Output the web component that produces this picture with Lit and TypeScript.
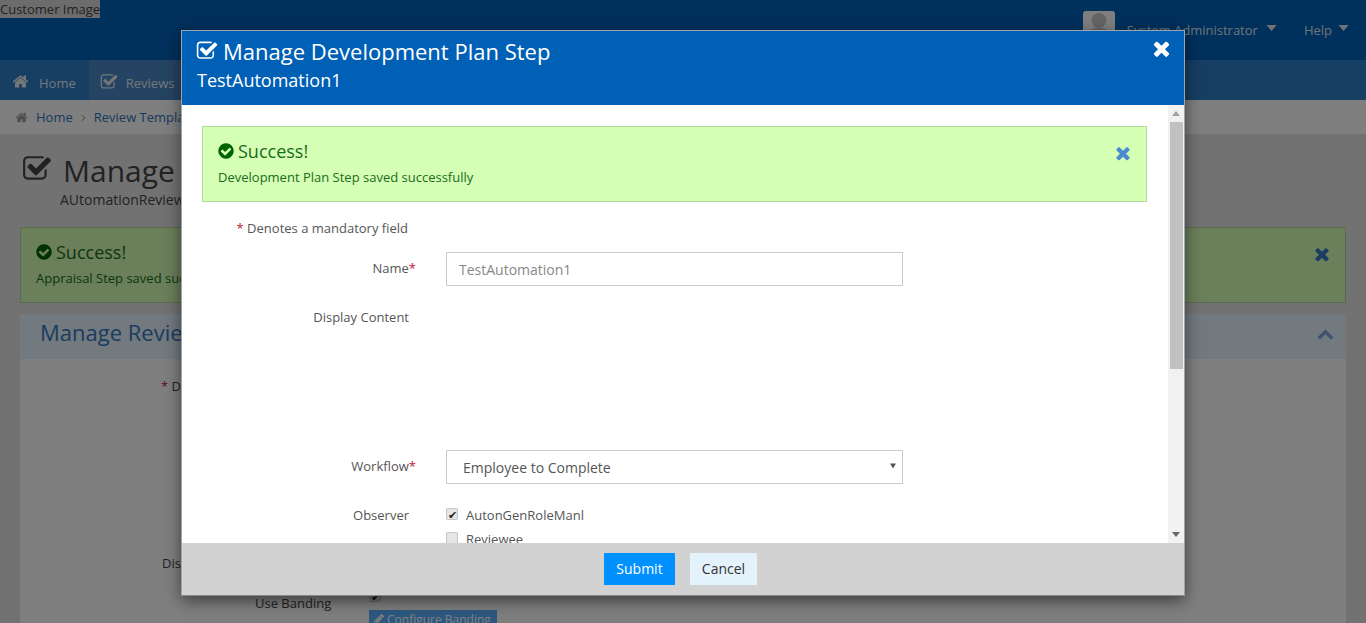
import { LitElement, html, css, svg } from "lit";
import { customElement } from "lit/decorators.js";

const P = {
  times: "M1490 1322q0 40-28 68l-136 136q-28 28-68 28t-68-28l-294-294-294 294q-28 28-68 28t-68-28l-136-136q-28-28-28-68t28-68l294-294-294-294q-28-28-28-68t28-68l136-136q28-28 68-28t68 28l294 294 294-294q28-28 68-28t68 28l136 136q28 28 28 68t-28 68l-294 294 294 294q28 28 28 68z",
  circle: "M1412 734q0-28-18-46l-91-90q-19-19-45-19t-45 19l-408 407-226-226q-19-19-45-19t-45 19l-91 90q-18 18-18 46 0 27 18 45l362 362q19 19 45 19 27 0 46-19l543-543q18-18 18-45zm252 162q0 209-103 385.500t-279.500 279.500-385.500 103-385.500-103-279.500-279.500-103-385.500 103-385.500 279.500-279.500 385.500-103 385.500 103 279.500 279.500 103 385.500z",
  square: "M1472 930v318q0 119-84.500 203.500t-203.500 84.500h-832q-119 0-203.500-84.500t-84.500-203.500v-832q0-119 84.500-203.500t203.500-84.500h832q63 0 117 25 15 7 18 23 3 17-9 29l-49 49q-10 10-23 10-3 0-9-2-23-6-45-6h-832q-66 0-113 47t-47 113v832q0 66 47 113t113 47h832q66 0 113-47t47-113v-254q0-13 9-22l64-64q10-10 23-10 6 0 12 3 20 8 20 29zm231-489l-814 814q-24 24-57 24t-57-24l-430-430q-24-24-24-57t24-57l110-110q24-24 57-24t57 24l263 263 647-647q24-24 57-24t57 24l110 110q24 24 24 57t-24 57z",
  home: "M1472 992v480q0 26-19 45t-45 19h-384v-384h-256v384h-384q-26 0-45-19t-19-45v-480q0-1 .5-3t.5-3l575-474 575 474q1 2 1 6zm223-69l-62 74q-8 9-21 11h-3q-13 0-21-7l-692-577-692 577q-12 8-24 7-13-2-21-11l-62-74q-8-10-7-23.500t11-21.500l719-599q32-26 76-26t76 26l244 204v-195q0-14 9-23t23-9h192q14 0 23 9t9 23v408l219 182q10 8 11 21.500t-7 23.500z",
  chevron: "M1683 1331l-166 165q-19 19-45 19t-45-19l-531-531-531 531q-19 19-45 19t-45-19l-166-165q-19-19-19-45.500t19-45.500l742-741q19-19 45-19t45 19l742 741q19 19 19 45.500t-19 45.500z",
  right: "M1171 960q0 13-10 23l-466 466q-10 10-23 10t-23-10l-50-50q-10-10-10-23t10-23l393-393-393-393q-10-10-10-23t10-23l50-50q10-10 23-10t23 10l466 466q10 10 10 23z",
  pencil: "M491 1536l91-91-235-235-91 91v107h128v128h107zm523-928q0-22-22-22-10 0-17 7l-542 542q-7 7-7 17 0 22 22 22 10 0 17-7l542-542q7-7 7-17zm-54-192l416 416-832 832h-416v-416zm683 96q0 53-37 90l-166 166-416-416 166-165q36-38 90-38 53 0 91 38l235 234q37 39 37 91z",
};

const icon = (d: string, cls: string) =>
  html`<svg class=${cls} viewBox="0 0 1792 1792" fill="currentColor">${svg`<path d=${d}></path>`}</svg>`;
const caret = (cls: string) =>
  html`<svg class="caret ${cls}" viewBox="0 0 12 7" fill="currentColor">${svg`<path d="M0 0h12L6 7z"></path>`}</svg>`;

@customElement("app-root")
export class AppRoot extends LitElement {
  static styles = css`
    :host {
      display: block;
      position: relative;
      height: 623px;
      overflow: hidden;
      font-family: "Open Sans", "Liberation Sans", sans-serif;
      font-size: 13px;
      color: #555;
      background: #e4e4e4;
    }
    svg { display: block; flex: none; }

    /* background page */
    .top {
      height: 60px;
      background: #0060b8;
      display: flex;
      justify-content: space-between;
      align-items: flex-start;
    }
    .customer {
      background: #d8d8d8;
      color: #444;
      font-size: 13px;
      line-height: 18px;
      height: 18px;
    }
    .user {
      display: flex;
      align-items: center;
      padding: 11px 17px 0 0;
      color: #dfe6ee;
      font-size: 13px;
      line-height: 38px;
    }
    .avatar {
      width: 32px;
      height: 38px;
      background: #fff;
      border-radius: 3px;
      color: #c8c8c8;
      margin-right: 12px;
    }
    .user .caret { width: 11px; height: 6px; margin: -4px 27px 0 8px; }
    .user .caret.last { margin: -4px 0 0 6px; }
    .nav {
      height: 40px;
      background: #2e7cc6;
      display: flex;
      color: #e8eef5;
    }
    .nav div {
      display: flex;
      align-items: center;
      padding: 6px 13px 0 12px;
      gap: 10px;
    }
    .nav .home svg { width: 17px; height: 17px; margin-top: -3px; }
    .nav .on { background: #4b86c4; width: 92px; box-sizing: border-box; gap: 8px; padding-left: 11px; }
    .nav .on svg { width: 18px; height: 18px; margin-top: -3px; }
    .crumb {
      height: 34px;
      background: #fff;
      display: flex;
      align-items: center;
      padding-left: 15px;
      color: #2f74b8;
      gap: 7px;
    }
    .crumb svg { width: 13px; height: 13px; color: #999; margin-right: 1px; }
    .crumb .sep { width: 11px; height: 11px; margin: 0 -2px; }
    .content { padding: 0 20px; }
    .pagehead {
      display: flex;
      gap: 11px;
      padding: 18px 0 0 2px;
      height: 93px;
      box-sizing: border-box;
      color: #444;
    }
    .pagehead svg { width: 30px; height: 30px; margin-top: 2px; }
    .pagehead h1 { margin: 0; font-size: 30px; font-weight: 400; line-height: 38px; }
    .pagehead p { margin: 1px 0 0 -3px; font-size: 14px; line-height: 18px; }
    .alert {
      position: relative;
      box-sizing: border-box;
      background: #d4ffb4;
      border: 1px solid #b5d8a0;
      color: #1c6b1c;
      padding: 11px 15px;
      height: 76px;
    }
    .alert .t {
      display: flex;
      align-items: center;
      gap: 3px;
      font-size: 18px;
      line-height: 26px;
    }
    .alert .t svg { width: 18px; height: 18px; color: #006400; margin-left: -1px; }
    .alert .m { font-size: 13px; line-height: 18px; margin-top: 4px; }
    .alert .x {
      position: absolute;
      right: 13px;
      top: 16px;
      width: 20px;
      height: 20px;
      color: #4a8bd0;
    }
    .pagealert .x { color: #3a78c8; }
    .panelhead {
      margin-top: 11px;
      height: 45px;
      background: #e4f2ff;
      display: flex;
      align-items: center;
      justify-content: space-between;
      padding: 0 12px 10px 20px;
      box-sizing: border-box;
      color: #3a78c0;
      font-size: 22px;
    }
    .panelhead svg { width: 17px; height: 17px; color: #7fa9d6; margin-top: 4px; }
    .panelbody {
      background: #fff;
      height: 300px;
      position: relative;
      font-size: 13px;
      color: #444;
    }
    .bg-row { position: absolute; color: #444; }
    .b1 { left: 141px; top: 18px; }
    .b2 { left: 142px; top: 195px; }
    .b3 { left: 235px; top: 235px; }
    .req { color: #c8102e; }
    .mark { position: absolute; left: 349px; top: 233px; }
    .band {
      position: absolute;
      left: 349px;
      top: 251px;
      background: #5cb0ff;
      color: #fff;
      font-size: 12px;
      display: flex;
      align-items: center;
      gap: 2px;
      padding: 0 6px 6px 4px;
      box-sizing: border-box;
      height: 24px;
    }
    .band svg { width: 12px; height: 12px; }

    /* overlay + modal */
    .backdrop { position: absolute; inset: 0; background: rgba(0, 0, 0, 0.5); }
    .modal {
      position: absolute;
      left: 181px;
      top: 30px;
      width: 1004px;
      height: 566px;
      box-sizing: border-box;
      border: 1px solid #9aa5b0;
      border-bottom-color: #888;
      background: #fff;
      display: flex;
      flex-direction: column;
      box-shadow: 0 5px 15px rgba(0, 0, 0, 0.5);
    }
    .mhead {
      position: relative;
      height: 74px;
      flex: none;
      background: #0060b6;
      color: #fff;
      padding: 5px 15px;
      box-sizing: border-box;
    }
    .mtitle { display: flex; align-items: center; gap: 5px; font-size: 22px; line-height: 30px; }
    .mtitle svg { width: 22px; height: 22px; margin-left: -1px; }
    .msub { font-size: 18px; line-height: 24px; margin-top: 2px; }
    .mclose {
      position: absolute;
      right: 11px;
      top: 6px;
      width: 23px;
      height: 23px;
    }
    .mmain { flex: 1; display: flex; min-height: 0; }
    .form { flex: 1; min-width: 0; overflow: hidden; padding: 21px 21px 0 20px; }
    .scroll {
      width: 16px;
      flex: none;
      display: flex;
      flex-direction: column;
      background: #f1f1f1;
    }
    .arrow {
      height: 17px;
      display: flex;
      align-items: center;
      justify-content: center;
      color: #666;
    }
    .arrow svg { width: 8px; height: 5px; }
    .arrow.up svg { transform: rotate(180deg); color: #a3a3a3; }
    .thumb { height: 247px; background: #c1c1c1; margin: 0 1px 0 2px; }
    .grow { flex: 1; }
    .mandatory {
      width: 206px;
      text-align: right;
      line-height: 20px;
      margin-top: 16px;
    }
    .row {
      display: grid;
      grid-template-columns: 214px 457px;
      column-gap: 30px;
      align-items: start;
    }
    .lab { text-align: right; line-height: 18px; }
    .lab .plain { padding-right: 7px; display: block; }
    .field {
      box-sizing: border-box;
      height: 34px;
      border: 1px solid #ccc;
      background: #fff;
      display: flex;
      align-items: center;
      padding: 0 12px;
      font-size: 14px;
      color: #888;
    }
    .select { color: #555; padding: 0 6px 0 16px; justify-content: space-between; }
    .select svg { width: 6px; height: 6px; color: #555; margin-top: -3px; }
    .r-name { margin-top: 14px; }
    .r-name .lab { padding-top: 7px; }
    .r-display { margin-top: 22px; height: 142px; }
    .r-work .lab { padding-top: 7px; }
    .r-obs { margin-top: 22px; }
    .checks { display: flex; flex-direction: column; gap: 6px; }
    .check { display: flex; align-items: center; gap: 8px; line-height: 18px; height: 18px; }
    .box {
      box-sizing: border-box;
      width: 12px;
      height: 12px;
      border: 1px solid #c4c4c4;
      border-radius: 2px;
      background: #e6e6e6;
      margin-top: -2px;
      display: flex;
      align-items: center;
      justify-content: center;
      color: #222;
      font-size: 11px;
      line-height: 1;
    }
    .mfoot {
      flex: none;
      height: 52px;
      background: #d2d2d2;
      display: flex;
      justify-content: center;
      align-items: center;
      gap: 15px;
      padding-right: 5px;
    }
    .btn {
      box-sizing: border-box;
      height: 32px;
      display: flex;
      align-items: center;
      justify-content: center;
      font-size: 14px;
      padding-bottom: 2px;
    }
    .submit { width: 71px; background: #0091ff; color: #fff; }
    .cancel { width: 67px; background: #e4f2fc; color: #333; }
  `;

  render() {
    return html`
      <div class="top">
        <div class="customer">Customer Image</div>
        <div class="user">
          <div class="avatar">
            <svg viewBox="0 0 32 38" width="32" height="38" fill="currentColor">
              ${svg`<circle cx="16" cy="9.500" r="7.500"></circle><path d="M4 24c0-5 5-7 12-7s12 2 12 7v14H4z"></path>`}
            </svg>
          </div>
          <span>System Administrator</span>${caret("")}
          <span>Help</span>${caret("last")}
        </div>
      </div>
      <div class="nav">
        <div class="home">${icon(P.home, "")}<span>Home</span></div>
        <div class="on">${icon(P.square, "")}<span>Reviews</span></div>
      </div>
      <div class="crumb">
        ${icon(P.home, "")}<span>Home</span>${icon(P.right, "sep")}<span>Review Templates</span>
      </div>
      <div class="content">
        <div class="pagehead">
          ${icon(P.square, "")}
          <div><h1>Manage Review</h1><p>AUtomationReview</p></div>
        </div>
        <div class="alert pagealert">
          <div class="t">${icon(P.circle, "")}<span>Success!</span></div>
          <div class="m">Appraisal Step saved successfully</div>
          ${icon(P.times, "x")}
        </div>
        <div class="panelhead"><span>Manage Review</span>${icon(P.chevron, "")}</div>
        <div class="panelbody">
          <div class="bg-row b1"><span class="req">*</span> Display Name</div>
          <div class="bg-row b2">Display Content</div>
          <div class="bg-row b3">Use Banding</div>
          <div class="mark"><span class="box">✔</span></div>
          <div class="band">${icon(P.pencil, "")}<span>Configure Banding</span></div>
        </div>
      </div>

      <div class="backdrop"></div>

      <div class="modal">
        <div class="mhead">
          <div class="mtitle">${icon(P.square, "")}<span>Manage Development Plan Step</span></div>
          <div class="msub">TestAutomation1</div>
          ${icon(P.times, "mclose")}
        </div>
        <div class="mmain">
          <div class="form">
            <div class="alert">
              <div class="t">${icon(P.circle, "")}<span>Success!</span></div>
              <div class="m">Development Plan Step saved successfully</div>
              ${icon(P.times, "x")}
            </div>
            <div class="mandatory"><span class="req">*</span> Denotes a mandatory field</div>
            <div class="row r-name">
              <div class="lab">Name<span class="req">*</span></div>
              <div class="field">TestAutomation1</div>
            </div>
            <div class="row r-display">
              <div class="lab"><span class="plain">Display Content</span></div>
              <div></div>
            </div>
            <div class="row r-work">
              <div class="lab">Workflow<span class="req">*</span></div>
              <div class="field select">
                <span>Employee to Complete</span>
                <svg viewBox="0 0 7 6" fill="currentColor">${svg`<path d="M0 0h7L3.500 6z"></path>`}</svg>
              </div>
            </div>
            <div class="row r-obs">
              <div class="lab"><span class="plain">Observer</span></div>
              <div class="checks">
                <div class="check"><span class="box">✔</span><span>AutonGenRoleManl</span></div>
                <div class="check"><span class="box"></span><span>Reviewee</span></div>
              </div>
            </div>
          </div>
          <div class="scroll">
            <div class="arrow up"><svg viewBox="0 0 8 5" fill="currentColor">${svg`<path d="M0 0h8L4 5z"></path>`}</svg></div>
            <div class="thumb"></div>
            <div class="grow"></div>
            <div class="arrow"><svg viewBox="0 0 8 5" fill="currentColor">${svg`<path d="M0 0h8L4 5z"></path>`}</svg></div>
          </div>
        </div>
        <div class="mfoot">
          <div class="btn submit">Submit</div>
          <div class="btn cancel">Cancel</div>
        </div>
      </div>
    `;
  }
}
